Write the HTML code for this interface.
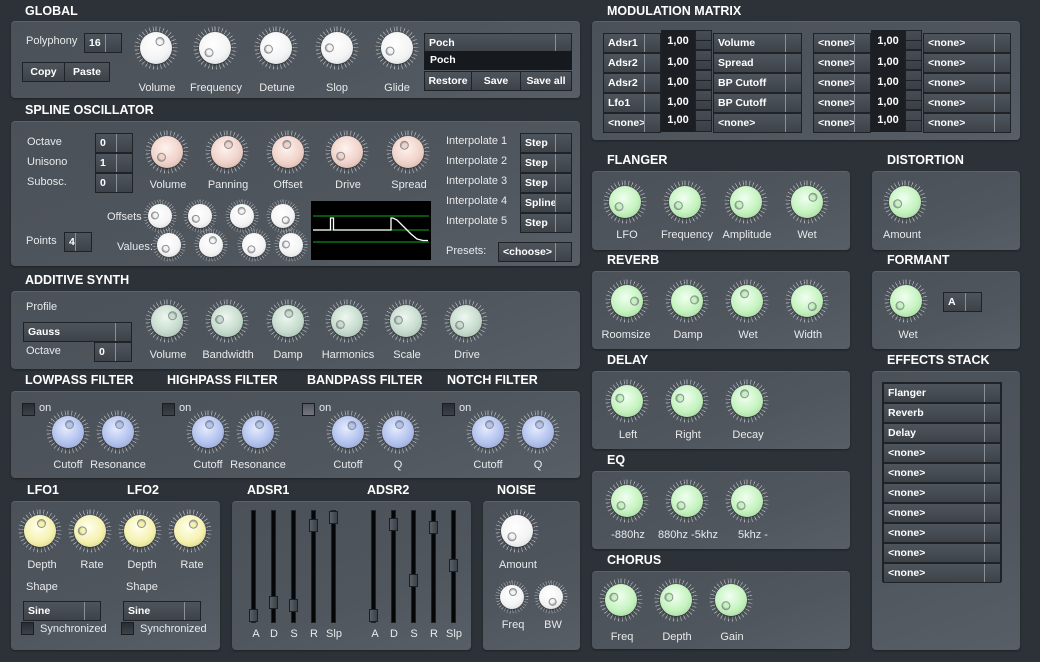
<!DOCTYPE html>
<html><head><meta charset="utf-8"><style>
*{box-sizing:border-box;margin:0;padding:0}
body{width:1040px;height:662px;background:#2d3238;position:relative;overflow:hidden;font-family:"Liberation Sans",Tahoma,sans-serif;font-size:11px;color:#e6e8ea}
.a{position:absolute}
.h{position:absolute;font-weight:bold;font-size:12.5px;color:#fff;letter-spacing:0}
.p{position:absolute;border-radius:4px;background:linear-gradient(160deg,#4b5158 0%,#50565d 60%,#585e66 100%);border-top:1px solid #5c636b;box-shadow:0 1px 2px #1d2024}
.t{position:absolute;white-space:nowrap;color:#e8eaec}
.lb{position:absolute;white-space:nowrap;transform:translateX(-50%);color:#e8eaec}
.cb{position:absolute;height:20px;background:linear-gradient(#4e545b,#3e434a);border:1px solid #1f2327;color:#fff;font-weight:bold;font-size:10.5px;line-height:18px;padding-left:4px;white-space:nowrap;overflow:hidden}
.cb::after{content:"";position:absolute;right:15px;top:0;bottom:0;width:1px;background:#8a9098}
.bt{position:absolute;height:20px;background:linear-gradient(#4e545b,#3e434a);border:1px solid #1f2327;color:#fff;font-weight:bold;font-size:10.5px;line-height:18px;text-align:center}
.vb{position:absolute;height:20px;background:#1b1f24;color:#fff;font-weight:bold;font-size:11px;line-height:18px;text-align:center}
.ar{position:absolute;width:17px;height:20px;background:linear-gradient(#474d54,#3a3f45);border:1px solid #1f2327}
.ar::after{content:"";position:absolute;left:0;right:0;top:9px;height:1px;background:#1f2327}
.ck{position:absolute;width:13px;height:13px;background:linear-gradient(#2a2e33,#3d4248);border:1px solid #1a1d21}
.kn{position:absolute;width:44px;height:44px;margin:-22px 0 0 -22px}
.kn::before{content:"";position:absolute;inset:0;border-radius:50%;background:repeating-conic-gradient(from -1deg,#c9cdd2 0 2.2deg,transparent 2.2deg 11deg);-webkit-mask:radial-gradient(circle,transparent 0 16px,#000 17px 21px,transparent 22px);mask:radial-gradient(circle,transparent 0 16px,#000 17px 21px,transparent 22px);opacity:.75}
.kn::after{content:"";position:absolute;inset:6px;border-radius:50%;background:radial-gradient(circle at 45% 38%,var(--l) 0,var(--c) 55%,var(--d) 100%);box-shadow:0 1px 2px rgba(0,0,0,.5)}
.kn i{position:absolute;inset:0;z-index:2;transform:rotate(var(--a,0deg))}
.kn i::after{content:"";position:absolute;left:50%;top:10px;width:7px;height:7px;margin-left:-3.5px;border-radius:50%;background:var(--c);border:1px solid #8b8f94;box-shadow:inset 0 1px 1px rgba(0,0,0,.3)}
.sm{width:34px;height:34px;margin:-17px 0 0 -17px}
.sm::before{-webkit-mask:radial-gradient(circle,transparent 0 11px,#000 12px 16px,transparent 17px);mask:radial-gradient(circle,transparent 0 11px,#000 12px 16px,transparent 17px)}
.sm::after{inset:5px}
.sm i::after{top:8px;width:6px;height:6px;margin-left:-3px}
.w{--l:#fff;--c:#f4f4f4;--d:#cfd2d6}
.pk{--l:#fff3ee;--c:#f0d3ca;--d:#c9aaa1}
.gg{--l:#eef7f0;--c:#c7dcce;--d:#9fb5a7}
.bl{--l:#e6ecff;--c:#b3c3ee;--d:#8c9dc8}
.y{--l:#fffff0;--c:#f5f2b0;--d:#cfcb88}
.g{--l:#f0fff0;--c:#c5f3bf;--d:#9ccb96}
.tr{position:absolute;width:5px;height:113px;background:#050607;border:1px solid #222}
.hd{position:absolute;width:9px;height:13px;background:linear-gradient(90deg,#5a6068,#3c4148);border:1px solid #1c1f23;margin-left:-2px}
</style></head><body>

<!-- headings -->
<div class="h" style="left:25px;top:4px">GLOBAL</div>
<div class="h" style="left:25px;top:103px">SPLINE OSCILLATOR</div>
<div class="h" style="left:25px;top:273px">ADDITIVE SYNTH</div>
<div class="h" style="left:25px;top:373px">LOWPASS FILTER</div>
<div class="h" style="left:167px;top:373px">HIGHPASS FILTER</div>
<div class="h" style="left:307px;top:373px">BANDPASS FILTER</div>
<div class="h" style="left:447px;top:373px">NOTCH FILTER</div>
<div class="h" style="left:27px;top:483px">LFO1</div>
<div class="h" style="left:127px;top:483px">LFO2</div>
<div class="h" style="left:247px;top:483px">ADSR1</div>
<div class="h" style="left:367px;top:483px">ADSR2</div>
<div class="h" style="left:497px;top:483px">NOISE</div>
<div class="h" style="left:607px;top:4px">MODULATION MATRIX</div>
<div class="h" style="left:607px;top:153px">FLANGER</div>
<div class="h" style="left:887px;top:153px">DISTORTION</div>
<div class="h" style="left:607px;top:253px">REVERB</div>
<div class="h" style="left:887px;top:253px">FORMANT</div>
<div class="h" style="left:607px;top:353px">DELAY</div>
<div class="h" style="left:887px;top:353px">EFFECTS STACK</div>
<div class="h" style="left:607px;top:453px">EQ</div>
<div class="h" style="left:607px;top:553px">CHORUS</div>

<!-- panels -->
<div class="p" style="left:11px;top:21px;width:569px;height:77px"></div>
<div class="p" style="left:11px;top:121px;width:569px;height:145px"></div>
<div class="p" style="left:11px;top:291px;width:569px;height:78px"></div>
<div class="p" style="left:11px;top:391px;width:569px;height:87px"></div>
<div class="p" style="left:11px;top:501px;width:209px;height:149px"></div>
<div class="p" style="left:232px;top:501px;width:239px;height:149px"></div>
<div class="p" style="left:483px;top:501px;width:97px;height:149px"></div>
<div class="p" style="left:592px;top:21px;width:428px;height:119px"></div>
<div class="p" style="left:592px;top:171px;width:258px;height:79px"></div>
<div class="p" style="left:872px;top:171px;width:148px;height:79px"></div>
<div class="p" style="left:592px;top:271px;width:258px;height:78px"></div>
<div class="p" style="left:872px;top:271px;width:148px;height:78px"></div>
<div class="p" style="left:592px;top:371px;width:258px;height:78px"></div>
<div class="p" style="left:872px;top:371px;width:148px;height:279px"></div>
<div class="p" style="left:592px;top:471px;width:258px;height:78px"></div>
<div class="p" style="left:592px;top:571px;width:258px;height:78px"></div>

<!-- GLOBAL -->
<div class="t" style="left:26px;top:35px">Polyphony</div>
<div class="cb" style="left:84px;top:33px;width:38px">16</div>
<div class="bt" style="left:22px;top:62px;width:43px">Copy</div>
<div class="bt" style="left:64px;top:62px;width:46px">Paste</div>
<div class="kn w" style="left:156px;top:48px;--a:20deg"><i></i></div>
<div class="kn w" style="left:215px;top:48px;--a:-140deg"><i></i></div>
<div class="kn w" style="left:276px;top:48px;--a:-110deg"><i></i></div>
<div class="kn w" style="left:337px;top:48px;--a:-100deg"><i></i></div>
<div class="kn w" style="left:397px;top:48px;--a:-125deg"><i></i></div>
<div class="lb" style="left:157px;top:82px">Volume</div>
<div class="lb" style="left:216px;top:82px">Frequency</div>
<div class="lb" style="left:277px;top:82px">Detune</div>
<div class="lb" style="left:337px;top:82px">Slop</div>
<div class="lb" style="left:397px;top:82px">Glide</div>
<div class="cb" style="left:424px;top:33px;width:148px">Poch</div>
<div class="a" style="left:424px;top:51px;width:148px;height:19px;background:#161a1f;color:#fff;font-weight:bold;font-size:10.5px;line-height:18px;padding-left:6px">Poch</div>
<div class="bt" style="left:424px;top:71px;width:48px">Restore</div>
<div class="bt" style="left:471px;top:71px;width:50px">Save</div>
<div class="bt" style="left:520px;top:71px;width:52px">Save all</div>

<!-- SPLINE -->
<div class="t" style="left:27px;top:136px">Octave</div>
<div class="t" style="left:27px;top:156px">Unisono</div>
<div class="t" style="left:27px;top:176px">Subosc.</div>
<div class="cb" style="left:95px;top:133px;width:38px">0</div>
<div class="cb" style="left:95px;top:153px;width:38px">1</div>
<div class="cb" style="left:95px;top:173px;width:38px">0</div>
<div class="kn pk" style="left:167px;top:152px;--a:-145deg"><i></i></div>
<div class="kn pk" style="left:227px;top:152px;--a:0deg"><i></i></div>
<div class="kn pk" style="left:288px;top:152px;--a:-20deg"><i></i></div>
<div class="kn pk" style="left:347px;top:152px;--a:-135deg"><i></i></div>
<div class="kn pk" style="left:408px;top:152px;--a:-40deg"><i></i></div>
<div class="lb" style="left:168px;top:179px">Volume</div>
<div class="lb" style="left:228px;top:179px">Panning</div>
<div class="lb" style="left:288px;top:179px">Offset</div>
<div class="lb" style="left:348px;top:179px">Drive</div>
<div class="lb" style="left:409px;top:179px">Spread</div>
<div class="t" style="left:107px;top:211px">Offsets</div>
<div class="t" style="left:117px;top:241px">Values:</div>
<div class="kn w sm" style="left:160px;top:216px;--a:-95deg"><i></i></div>
<div class="kn w sm" style="left:200px;top:216px;--a:-135deg"><i></i></div>
<div class="kn w sm" style="left:242px;top:216px;--a:-15deg"><i></i></div>
<div class="kn w sm" style="left:283px;top:216px;--a:135deg"><i></i></div>
<div class="kn w sm" style="left:169px;top:245px;--a:-150deg"><i></i></div>
<div class="kn w sm" style="left:211px;top:245px;--a:10deg"><i></i></div>
<div class="kn w sm" style="left:254px;top:245px;--a:-160deg"><i></i></div>
<div class="kn w sm" style="left:291px;top:245px;--a:-95deg"><i></i></div>
<div class="t" style="left:26px;top:235px">Points</div>
<div class="cb" style="left:64px;top:232px;width:28px">4</div>
<svg class="a" style="left:311px;top:201px" width="120" height="59" viewBox="0 0 120 59">
<rect width="120" height="59" fill="#000"/>
<g stroke="#0b8a18" stroke-width="1.2"><line x1="2" y1="15" x2="118" y2="15"/><line x1="2" y1="29" x2="118" y2="29"/><line x1="2" y1="41" x2="118" y2="41"/></g>
<path d="M2 29 H19.5 V17 H22.5 V29 H80 V17 H82 L86 19 L93 26 L100 33 L106 38 L112 39.5 H117" fill="none" stroke="#fff" stroke-width="1.3"/>
</svg>
<div class="t" style="left:446px;top:135px">Interpolate 1</div>
<div class="t" style="left:446px;top:155px">Interpolate 2</div>
<div class="t" style="left:446px;top:175px">Interpolate 3</div>
<div class="t" style="left:446px;top:195px">Interpolate 4</div>
<div class="t" style="left:446px;top:215px">Interpolate 5</div>
<div class="cb" style="left:520px;top:133px;width:52px">Step</div>
<div class="cb" style="left:520px;top:153px;width:52px">Step</div>
<div class="cb" style="left:520px;top:173px;width:52px">Step</div>
<div class="cb" style="left:520px;top:193px;width:52px">Spline</div>
<div class="cb" style="left:520px;top:213px;width:52px">Step</div>
<div class="t" style="left:446px;top:245px">Presets:</div>
<div class="cb" style="left:498px;top:242px;width:74px">&lt;choose&gt;</div>

<!-- ADDITIVE -->
<div class="t" style="left:26px;top:301px">Profile</div>
<div class="cb" style="left:23px;top:322px;width:109px">Gauss</div>
<div class="t" style="left:26px;top:345px">Octave</div>
<div class="cb" style="left:94px;top:342px;width:38px">0</div>
<div class="kn gg" style="left:167px;top:321px;--a:35deg"><i></i></div>
<div class="kn gg" style="left:227px;top:321px;--a:-90deg"><i></i></div>
<div class="kn gg" style="left:288px;top:321px;--a:-5deg"><i></i></div>
<div class="kn gg" style="left:347px;top:321px;--a:-130deg"><i></i></div>
<div class="kn gg" style="left:406px;top:321px;--a:-95deg"><i></i></div>
<div class="kn gg" style="left:466px;top:321px;--a:-135deg"><i></i></div>
<div class="lb" style="left:168px;top:349px">Volume</div>
<div class="lb" style="left:228px;top:349px">Bandwidth</div>
<div class="lb" style="left:288px;top:349px">Damp</div>
<div class="lb" style="left:348px;top:349px">Harmonics</div>
<div class="lb" style="left:407px;top:349px">Scale</div>
<div class="lb" style="left:467px;top:349px">Drive</div>

<!-- FILTERS -->
<div class="ck" style="left:22px;top:403px"></div><div class="t" style="left:39px;top:402px">on</div>
<div class="ck" style="left:162px;top:403px"></div><div class="t" style="left:179px;top:402px">on</div>
<div class="ck" style="left:302px;top:403px;background:linear-gradient(#55595f,#73777d)"></div><div class="t" style="left:319px;top:402px">on</div>
<div class="ck" style="left:442px;top:403px"></div><div class="t" style="left:459px;top:402px">on</div>
<div class="kn bl" style="left:68px;top:432px"><i></i></div>
<div class="kn bl" style="left:118px;top:432px"><i></i></div>
<div class="kn bl" style="left:208px;top:432px"><i></i></div>
<div class="kn bl" style="left:258px;top:432px"><i></i></div>
<div class="kn bl" style="left:348px;top:432px;--a:20deg"><i></i></div>
<div class="kn bl" style="left:398px;top:432px"><i></i></div>
<div class="kn bl" style="left:488px;top:432px"><i></i></div>
<div class="kn bl" style="left:538px;top:432px"><i></i></div>
<div class="lb" style="left:68px;top:459px">Cutoff</div>
<div class="lb" style="left:118px;top:459px">Resonance</div>
<div class="lb" style="left:208px;top:459px">Cutoff</div>
<div class="lb" style="left:258px;top:459px">Resonance</div>
<div class="lb" style="left:348px;top:459px">Cutoff</div>
<div class="lb" style="left:398px;top:459px">Q</div>
<div class="lb" style="left:488px;top:459px">Cutoff</div>
<div class="lb" style="left:538px;top:459px">Q</div>

<!-- LFO -->
<div class="kn y" style="left:40px;top:531px"><i></i></div>
<div class="kn y" style="left:90px;top:531px;--a:-100deg"><i></i></div>
<div class="kn y" style="left:140px;top:531px"><i></i></div>
<div class="kn y" style="left:190px;top:531px;--a:15deg"><i></i></div>
<div class="lb" style="left:42px;top:559px">Depth</div>
<div class="lb" style="left:92px;top:559px">Rate</div>
<div class="lb" style="left:142px;top:559px">Depth</div>
<div class="lb" style="left:192px;top:559px">Rate</div>
<div class="t" style="left:26px;top:581px">Shape</div>
<div class="t" style="left:126px;top:581px">Shape</div>
<div class="cb" style="left:23px;top:601px;width:78px">Sine</div>
<div class="cb" style="left:123px;top:601px;width:78px">Sine</div>
<div class="ck" style="left:21px;top:622px"></div><div class="t" style="left:40px;top:623px">Synchronized</div>
<div class="ck" style="left:121px;top:622px"></div><div class="t" style="left:140px;top:623px">Synchronized</div>

<!-- ADSR -->
<div class="tr" style="left:251px;top:510px"></div><div class="hd" style="left:251px;top:609px"></div>
<div class="tr" style="left:271px;top:510px"></div><div class="hd" style="left:271px;top:596px"></div>
<div class="tr" style="left:291px;top:510px"></div><div class="hd" style="left:291px;top:599px"></div>
<div class="tr" style="left:311px;top:510px"></div><div class="hd" style="left:311px;top:519px"></div>
<div class="tr" style="left:331px;top:510px"></div><div class="hd" style="left:331px;top:511px"></div>
<div class="tr" style="left:371px;top:510px"></div><div class="hd" style="left:371px;top:609px"></div>
<div class="tr" style="left:391px;top:510px"></div><div class="hd" style="left:391px;top:518px"></div>
<div class="tr" style="left:411px;top:510px"></div><div class="hd" style="left:411px;top:574px"></div>
<div class="tr" style="left:431px;top:510px"></div><div class="hd" style="left:431px;top:521px"></div>
<div class="tr" style="left:451px;top:510px"></div><div class="hd" style="left:451px;top:559px"></div>
<div class="lb" style="left:256px;top:628px">A</div><div class="lb" style="left:274px;top:628px">D</div><div class="lb" style="left:294px;top:628px">S</div><div class="lb" style="left:314px;top:628px">R</div><div class="lb" style="left:334px;top:628px">Slp</div>
<div class="lb" style="left:375px;top:628px">A</div><div class="lb" style="left:394px;top:628px">D</div><div class="lb" style="left:414px;top:628px">S</div><div class="lb" style="left:434px;top:628px">R</div><div class="lb" style="left:454px;top:628px">Slp</div>

<!-- NOISE -->
<div class="kn w" style="left:517px;top:531px;--a:-150deg"><i></i></div>
<div class="lb" style="left:518px;top:559px">Amount</div>
<div class="kn w sm" style="left:512px;top:597px"><i></i></div>
<div class="kn w sm" style="left:551px;top:597px;--a:150deg"><i></i></div>
<div class="lb" style="left:513px;top:619px">Freq</div>
<div class="lb" style="left:553px;top:619px">BW</div>

<!-- MOD MATRIX -->
<div class="cb" style="left:603px;top:33px;width:58px">Adsr1</div><div class="vb" style="left:661px;top:30px;width:34px;height:23px;line-height:22px">1,00</div><div class="ar" style="left:695px;top:30px"></div><div class="cb" style="left:713px;top:33px;width:89px">Volume</div>
<div class="cb" style="left:603px;top:53px;width:58px">Adsr2</div><div class="vb" style="left:661px;top:53px;width:34px">1,00</div><div class="ar" style="left:695px;top:50px"></div><div class="cb" style="left:713px;top:53px;width:89px">Spread</div>
<div class="cb" style="left:603px;top:73px;width:58px">Adsr2</div><div class="vb" style="left:661px;top:73px;width:34px">1,00</div><div class="ar" style="left:695px;top:70px"></div><div class="cb" style="left:713px;top:73px;width:89px">BP Cutoff</div>
<div class="cb" style="left:603px;top:93px;width:58px">Lfo1</div><div class="vb" style="left:661px;top:93px;width:34px">1,00</div><div class="ar" style="left:695px;top:90px"></div><div class="cb" style="left:713px;top:93px;width:89px">BP Cutoff</div>
<div class="cb" style="left:603px;top:113px;width:58px">&lt;none&gt;</div><div class="vb" style="left:661px;top:111px;width:34px;height:21px">1,00</div><div class="ar" style="left:695px;top:110px;height:22px"></div><div class="cb" style="left:713px;top:113px;width:89px">&lt;none&gt;</div>

<div class="cb" style="left:813px;top:33px;width:58px">&lt;none&gt;</div><div class="vb" style="left:871px;top:30px;width:34px;height:23px;line-height:22px">1,00</div><div class="ar" style="left:905px;top:30px"></div><div class="cb" style="left:923px;top:33px;width:88px">&lt;none&gt;</div>
<div class="cb" style="left:813px;top:53px;width:58px">&lt;none&gt;</div><div class="vb" style="left:871px;top:53px;width:34px">1,00</div><div class="ar" style="left:905px;top:50px"></div><div class="cb" style="left:923px;top:53px;width:88px">&lt;none&gt;</div>
<div class="cb" style="left:813px;top:73px;width:58px">&lt;none&gt;</div><div class="vb" style="left:871px;top:73px;width:34px">1,00</div><div class="ar" style="left:905px;top:70px"></div><div class="cb" style="left:923px;top:73px;width:88px">&lt;none&gt;</div>
<div class="cb" style="left:813px;top:93px;width:58px">&lt;none&gt;</div><div class="vb" style="left:871px;top:93px;width:34px">1,00</div><div class="ar" style="left:905px;top:90px"></div><div class="cb" style="left:923px;top:93px;width:88px">&lt;none&gt;</div>
<div class="cb" style="left:813px;top:113px;width:58px">&lt;none&gt;</div><div class="vb" style="left:871px;top:111px;width:34px;height:21px">1,00</div><div class="ar" style="left:905px;top:110px;height:22px"></div><div class="cb" style="left:923px;top:113px;width:88px">&lt;none&gt;</div>

<!-- FLANGER / DISTORTION -->
<div class="kn g" style="left:625px;top:202px;--a:-140deg"><i></i></div>
<div class="kn g" style="left:685px;top:202px;--a:-130deg"><i></i></div>
<div class="kn g" style="left:746px;top:202px;--a:-125deg"><i></i></div>
<div class="kn g" style="left:807px;top:202px;--a:40deg"><i></i></div>
<div class="lb" style="left:627px;top:229px">LFO</div>
<div class="lb" style="left:687px;top:229px">Frequency</div>
<div class="lb" style="left:747px;top:229px">Amplitude</div>
<div class="lb" style="left:807px;top:229px">Wet</div>
<div class="kn g" style="left:905px;top:202px;--a:-115deg"><i></i></div>
<div class="lb" style="left:902px;top:229px">Amount</div>

<!-- REVERB / FORMANT -->
<div class="kn g" style="left:627px;top:301px;--a:80deg"><i></i></div>
<div class="kn g" style="left:687px;top:301px;--a:70deg"><i></i></div>
<div class="kn g" style="left:747px;top:301px;--a:-30deg"><i></i></div>
<div class="kn g" style="left:807px;top:301px;--a:125deg"><i></i></div>
<div class="lb" style="left:626px;top:329px">Roomsize</div>
<div class="lb" style="left:688px;top:329px">Damp</div>
<div class="lb" style="left:748px;top:329px">Wet</div>
<div class="lb" style="left:808px;top:329px">Width</div>
<div class="kn g" style="left:906px;top:301px;--a:-140deg"><i></i></div>
<div class="lb" style="left:908px;top:329px">Wet</div>
<div class="cb" style="left:943px;top:292px;width:39px">A</div>

<!-- DELAY -->
<div class="kn g" style="left:627px;top:401px;--a:-80deg"><i></i></div>
<div class="kn g" style="left:687px;top:401px;--a:-80deg"><i></i></div>
<div class="kn g" style="left:747px;top:401px;--a:-30deg"><i></i></div>
<div class="lb" style="left:628px;top:429px">Left</div>
<div class="lb" style="left:688px;top:429px">Right</div>
<div class="lb" style="left:748px;top:429px">Decay</div>

<!-- EQ -->
<div class="kn g" style="left:627px;top:501px;--a:-140deg"><i></i></div>
<div class="kn g" style="left:687px;top:501px;--a:-140deg"><i></i></div>
<div class="kn g" style="left:747px;top:501px;--a:-140deg"><i></i></div>
<div class="lb" style="left:628px;top:529px">-880hz</div>
<div class="lb" style="left:688px;top:529px">880hz -5khz</div>
<div class="lb" style="left:753px;top:529px">5khz -</div>

<!-- CHORUS -->
<div class="kn g" style="left:621px;top:600px;--a:-80deg"><i></i></div>
<div class="kn g" style="left:676px;top:600px;--a:-80deg"><i></i></div>
<div class="kn g" style="left:731px;top:600px;--a:-150deg"><i></i></div>
<div class="lb" style="left:622px;top:631px">Freq</div>
<div class="lb" style="left:677px;top:631px">Depth</div>
<div class="lb" style="left:732px;top:631px">Gain</div>

<!-- EFFECTS STACK -->
<div class="a" style="left:882px;top:382px;width:120px;height:200px;border:1px solid #1f2327"></div>
<div class="cb" style="left:883px;top:383px;width:118px">Flanger</div>
<div class="cb" style="left:883px;top:403px;width:118px">Reverb</div>
<div class="cb" style="left:883px;top:423px;width:118px">Delay</div>
<div class="cb" style="left:883px;top:443px;width:118px">&lt;none&gt;</div>
<div class="cb" style="left:883px;top:463px;width:118px">&lt;none&gt;</div>
<div class="cb" style="left:883px;top:483px;width:118px">&lt;none&gt;</div>
<div class="cb" style="left:883px;top:503px;width:118px">&lt;none&gt;</div>
<div class="cb" style="left:883px;top:523px;width:118px">&lt;none&gt;</div>
<div class="cb" style="left:883px;top:543px;width:118px">&lt;none&gt;</div>
<div class="cb" style="left:883px;top:563px;width:118px">&lt;none&gt;</div>

</body></html>
